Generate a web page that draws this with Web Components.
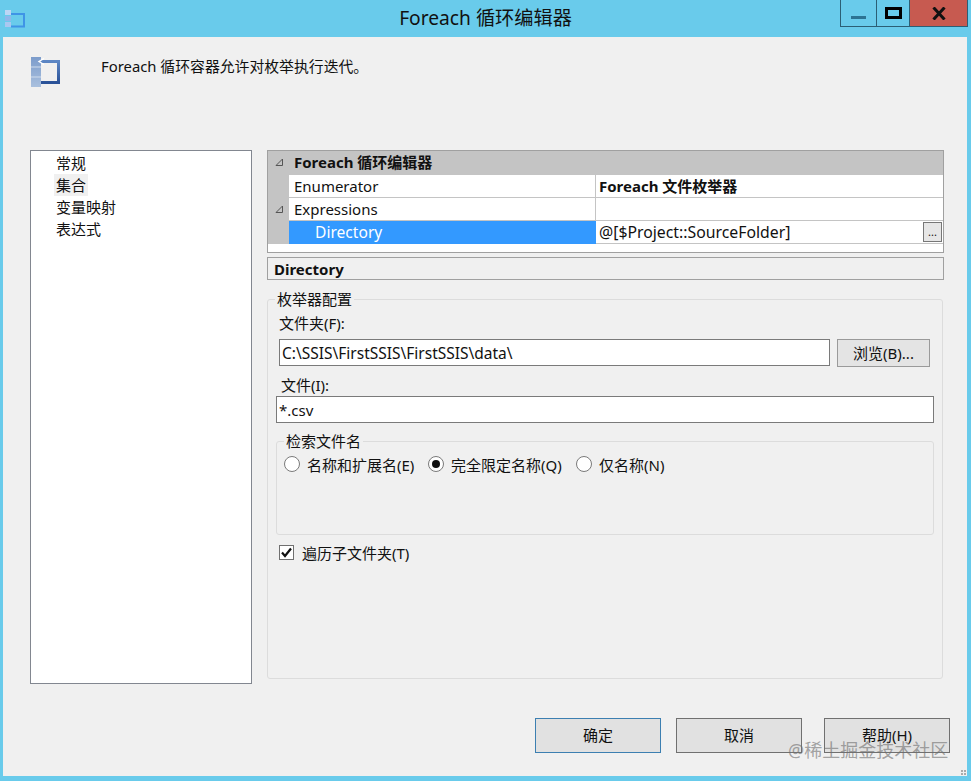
<!DOCTYPE html>
<html>
<head>
<meta charset="utf-8">
<style>
  html, body { margin: 0; height: 100%; }
  body { font: 15px "Noto Sans", "Noto Sans CJK SC", sans-serif; color: #111; overflow: hidden; }
</style>
</head>
<body>
<dlg-window>
  <title-bar slot="title">Foreach 循环编辑器</title-bar>
  <dlg-header slot="head">Foreach 循环容器允许对枚举执行迭代。</dlg-header>
  <nav-list slot="nav">
    <nav-item>常规</nav-item>
    <nav-item active>集合</nav-item>
    <nav-item>变量映射</nav-item>
    <nav-item>表达式</nav-item>
  </nav-list>
  <div slot="main">
    <prop-grid></prop-grid>
    <desc-pane>Directory</desc-pane>
    <enum-config></enum-config>
  </div>
  <push-button slot="foot" default>确定</push-button>
  <push-button slot="foot" style="margin-left:15px">取消</push-button>
  <push-button slot="foot" style="margin-left:22px">帮助(H)</push-button>
</dlg-window>

<script>
// small helper, every element here is just a template in a shadow root
function shadow(el, html) {
  el.attachShadow({ mode: 'open' });
  el.shadowRoot.innerHTML = html;
}

class DlgWindow extends HTMLElement {
  connectedCallback() {
    shadow(this, `
      <style>
        :host { display: flex; flex-direction: column; width: 971px; height: 781px; background: #69cbeb; position: relative; }
        .client { margin: 0 4px 5px 3px; height: 739px; background: #f0f0f0; box-sizing: border-box; padding-left: 27px; display: flex; flex-direction: column; }
        .body { display: flex; height: 534px; }
        .main { margin-left: 15px; width: 677px; }
        .foot { display: flex; margin-top: 34px; margin-left: 505px; }
        .mark { position: absolute; left: 788px; top: 737px; font-size: 18px; line-height: 26px; color: rgba(110,110,110,.62); white-space: nowrap; }
        .grip { position: absolute; right: 5px; bottom: 6px; width: 5px; height: 5px; background: radial-gradient(circle at 1px 1px, #aaa 1px, transparent 1.2px) 0 0 / 3px 3px; }
      </style>
      <slot name="title"></slot>
      <div class="client">
        <slot name="head"></slot>
        <div class="body"><slot name="nav"></slot><div class="main"><slot name="main"></slot></div></div>
        <div class="foot"><slot name="foot"></slot></div>
      </div>
      <div class="mark">@稀土掘金技术社区</div>
      <div class="grip"></div>
    `);
  }
}

class TitleBar extends HTMLElement {
  connectedCallback() {
    shadow(this, `
      <style>
        :host { display: flex; height: 37px; position: relative; align-items: flex-start; }
        .icon { margin: 4px 0 0 5px; width: 21px; height: 24px; flex: none; }
        .text { position: absolute; left: 0; width: 971px; top: 4px; text-align: center; font-size: 19.2px; line-height: 28px; color: #111; }
        .caps { margin-left: auto; margin-right: 3px; display: flex; height: 27px; position: relative; }
        .cap { box-sizing: border-box; height: 27px; border: 1px solid #2b5f75; border-top: 0; display: flex; align-items: center; justify-content: center; }
        .min { width: 37px; }
        .max { width: 33px; border-left: 0; }
        .close { width: 58px; border-left: 0; background: #c75a50; }
        .min i { display: block; width: 15px; height: 3px; background: #2c7393; margin-top: 8px; }
        .max i { display: block; width: 11px; height: 6px; border: 3px solid #000; }
        svg { display: block; }
      </style>
      <svg class="icon" viewBox="0 0 21 24">
        <path d="M6 10h13v12.5H6" fill="none" stroke="#3f94e6" stroke-width="2"/>
        <rect x="0" y="6" width="6" height="5" fill="#bcd6f5"/>
        <rect x="0" y="12" width="6" height="5" fill="#8fb7ea"/>
        <rect x="0" y="18" width="6" height="5" fill="#a9c8f0"/>
      </svg>
      <div class="text"><slot></slot></div>
      <div class="caps">
        <div class="cap min"><i></i></div>
        <div class="cap max"><i></i></div>
        <div class="cap close">
          <svg width="14" height="13" viewBox="0 0 14 13"><path d="M1.5 .5 12.5 12.5M12.5 .5 1.5 12.5" stroke="#111" stroke-width="3" fill="none"/></svg>
        </div>
      </div>
    `);
  }
}

class DlgHeader extends HTMLElement {
  connectedCallback() {
    shadow(this, `
      <style>
        :host { display: flex; height: 113px; align-items: flex-start; }
        svg { margin: 20px 0 0 1px; flex: none; display: block; }
        .t { margin: 18px 0 0 41px; line-height: 22px; font-size: 14.85px; }
      </style>
      <svg width="29" height="30" viewBox="0 0 29 30">
        <defs>
          <linearGradient id="b" x1="0" y1="0" x2="0" y2="1"><stop offset="0" stop-color="#7c9ccb"/><stop offset="1" stop-color="#a9c0de"/></linearGradient>
          <linearGradient id="c" x1="0" y1="0" x2="0" y2="1"><stop offset="0" stop-color="#5c86c4"/><stop offset="1" stop-color="#2a5298"/></linearGradient>
        </defs>
        <path d="M10 4.5h17.5v21H10" fill="none" stroke="url(#c)" stroke-width="3"/>
        <rect x="0" y="0" width="10" height="30" fill="url(#b)"/>
        <path d="M0 10h10M0 20h10" stroke="#cfdcec"/>
        <path d="M13 1.5 8 4.5l5 3" fill="none" stroke="#fff" stroke-width="1.4"/>
      </svg>
      <div class="t"><slot></slot></div>
    `);
  }
}

class NavList extends HTMLElement {
  connectedCallback() {
    shadow(this, `
      <style>
        :host { display: block; box-sizing: border-box; width: 222px; height: 534px; background: #fff; border: 1px solid #828790; padding: 1px 0 0 23px; }
      </style>
      <slot></slot>
    `);
  }
}

class NavItem extends HTMLElement {
  connectedCallback() {
    const on = this.hasAttribute('active');
    shadow(this, `
      <style>
        :host { display: block; height: 22px; line-height: 22px; font-size: 15px; }
        span { display: inline-block; padding: 0 2px; ${on ? 'background:#f0f0f0;' : ''} }
      </style>
      <span><slot></slot></span>
    `);
  }
}

class PropGrid extends HTMLElement {
  connectedCallback() {
    shadow(this, `
      <style>
        :host { display: block; box-sizing: border-box; height: 103px; border: 1px solid #a0a0a0; background: #fff; font-size: 15px; }
        .row { display: flex; height: 23px; line-height: 22px; }
        .head { height: 24px; background: #c4c4c4; font-weight: 700; line-height: 23px; }
        .gut { width: 21px; flex: none; background: #c4c4c4; position: relative; }
        .gut svg { position: absolute; left: 7px; top: 7px; }
        .k { width: 307px; flex: none; box-sizing: border-box; padding-left: 5px; border-right: 1px solid #c4c4c4; border-bottom: 1px solid #c4c4c4; }
        .v { flex: 1; box-sizing: border-box; padding-left: 3px; border-bottom: 1px solid #c4c4c4; display: flex; }
        .head .k { width: auto; border: 0; padding-left: 5px; }
        .sel { background: #3399ff; color: #fff; padding-left: 26px; font-size: 15.6px; border-right-color: #3399ff; border-bottom-color: #3399ff; }
        .b { font-weight: 700; }
        .long { font-size: 15.8px; }
        .dots { margin-left: auto; margin-right: 1px; margin-top: 1px; box-sizing: border-box; width: 19px; height: 20px; border: 1px solid #777; background: #e6e6e6; font-size: 11px; line-height: 18px; text-align: center; }
      </style>
      <div class="row head">
        <div class="gut"><svg width="9" height="9" viewBox="0 0 9 9"><path d="M7.5 1V7.5H1Z" fill="none" stroke="#555"/></svg></div>
        <div class="k">Foreach 循环编辑器</div>
      </div>
      <div class="row">
        <div class="gut"></div>
        <div class="k">Enumerator</div>
        <div class="v b">Foreach 文件枚举器</div>
      </div>
      <div class="row">
        <div class="gut"><svg width="9" height="9" viewBox="0 0 9 9"><path d="M7.5 1V7.5H1Z" fill="none" stroke="#555"/></svg></div>
        <div class="k">Expressions</div>
        <div class="v"></div>
      </div>
      <div class="row">
        <div class="gut"></div>
        <div class="k sel">Directory</div>
        <div class="v"><span class="long">@[$Project::SourceFolder]</span><div class="dots">...</div></div>
      </div>
    `);
  }
}

class DescPane extends HTMLElement {
  connectedCallback() {
    shadow(this, `
      <style>
        :host { display: block; box-sizing: border-box; height: 23px; margin-top: 4px; border: 1px solid #a0a0a0; padding-left: 6px; font-weight: 700; line-height: 22px; overflow: hidden; font-size: 15px; }
      </style>
      <slot></slot>
    `);
  }
}

class GroupBox extends HTMLElement {
  connectedCallback() {
    shadow(this, `
      <style>
        :host { display: block; }
        fieldset { margin: 0; padding: 0; height: 100%; box-sizing: border-box; border: 1px solid #dcdcdc; border-radius: 3px; min-width: 0; }
        legend { padding: 0 2px; margin-left: 7px; line-height: 22px; font-size: 15px; }
      </style>
      <fieldset><legend>${this.getAttribute('label')}</legend><slot></slot></fieldset>
    `);
  }
}

class TextField extends HTMLElement {
  connectedCallback() {
    shadow(this, `
      <style>
        :host { display: block; box-sizing: border-box; height: 27px; border: 1px solid #7a7a7a; background: #fff; line-height: 26px; padding-left: 2px; font-size: 15px; white-space: nowrap; overflow: hidden; }
      </style>
      <slot></slot>
    `);
  }
}

class PushButton extends HTMLElement {
  connectedCallback() {
    const def = this.hasAttribute('default');
    shadow(this, `
      <style>
        :host { display: block; box-sizing: border-box; width: 126px; height: 35px; border: 1px solid ${def ? '#3c7fb1' : '#707070'}; background: #e1e1e1; text-align: center; line-height: 33px; font-size: 15px; }
      </style>
      <slot></slot>
    `);
  }
}

class RadioOpt extends HTMLElement {
  connectedCallback() {
    const on = this.hasAttribute('checked');
    shadow(this, `
      <style>
        :host { display: flex; align-items: center; height: 22px; font-size: 15px; white-space: nowrap; }
        i { box-sizing: border-box; width: 16px; height: 16px; border: 1px solid #7a7a7a; border-radius: 50%; background: #fff; margin-right: 7px; display: flex; align-items: center; justify-content: center; flex: none; }
        b { width: 8px; height: 8px; border-radius: 50%; background: #111; }
      </style>
      <i>${on ? '<b></b>' : ''}</i><slot></slot>
    `);
  }
}

class CheckOpt extends HTMLElement {
  connectedCallback() {
    shadow(this, `
      <style>
        :host { display: flex; align-items: center; height: 22px; font-size: 15px; white-space: nowrap; }
        svg { margin-right: 8px; flex: none; display: block; }
      </style>
      <svg width="15" height="15" viewBox="0 0 15 15">
        <rect x=".5" y=".5" width="14" height="14" fill="#fff" stroke="#707070"/>
        <path d="M3 7.5 6 11 12 3.5" fill="none" stroke="#111" stroke-width="2.2"/>
      </svg>
      <slot></slot>
    `);
  }
}

class EnumConfig extends HTMLElement {
  connectedCallback() {
    shadow(this, `
      <style>
        :host { display: block; margin-top: 8px; height: 391px; width: 676px; }
        group-box.outer { height: 100%; }
        .lbl { line-height: 22px; font-size: 15px; }
        .folder { display: flex; margin: 3px 0 0 11px; }
        .folder text-field { width: 551px; font-size: 15.5px; }
        .browse { width: 93px; height: 28px; line-height: 26px; margin-left: 7px; background: #e4e4e4; border: 1px solid #9a9a9a; box-sizing: border-box; text-align: center; font-size: 15px; }
        .inner { margin: 7px 8px 0 8px; height: 105px; }
        .opts { display: flex; margin: 1px 0 0 7px; }
        .chk { margin: 6px 0 0 11px; }
      </style>
      <group-box class="outer" label="枚举器配置">
        <div class="lbl" style="margin:2px 0 0 11px">文件夹(F):</div>
        <div class="folder" style="margin-top:5px">
          <text-field>C:\\SSIS\\FirstSSIS\\FirstSSIS\\data\\</text-field>
          <div class="browse">浏览(B)...</div>
        </div>
        <div class="lbl" style="margin:7px 0 0 13px">文件(I):</div>
        <text-field style="margin:0 8px 0 8px;width:658px">*.csv</text-field>
        <group-box class="inner" label="检索文件名">
          <div class="opts">
            <radio-opt style="width:144px">名称和扩展名(E)</radio-opt>
            <radio-opt style="width:148px" checked>完全限定名称(Q)</radio-opt>
            <radio-opt>仅名称(N)</radio-opt>
          </div>
        </group-box>
        <check-opt class="chk">遍历子文件夹(T)</check-opt>
      </group-box>
    `);
  }
}

customElements.define('group-box', GroupBox);
customElements.define('text-field', TextField);
customElements.define('radio-opt', RadioOpt);
customElements.define('check-opt', CheckOpt);
customElements.define('push-button', PushButton);
customElements.define('nav-item', NavItem);
customElements.define('nav-list', NavList);
customElements.define('prop-grid', PropGrid);
customElements.define('desc-pane', DescPane);
customElements.define('enum-config', EnumConfig);
customElements.define('dlg-header', DlgHeader);
customElements.define('title-bar', TitleBar);
customElements.define('dlg-window', DlgWindow);
</script>
</body>
</html>
